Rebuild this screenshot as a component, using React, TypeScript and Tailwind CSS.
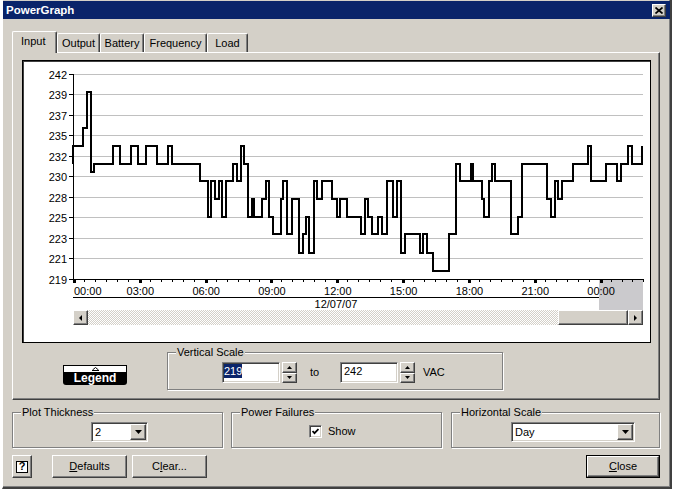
import React from "react";

const raised =
  "border border-t-white border-l-white border-r-[#404040] border-b-[#404040] bg-[#d4d0c8] shadow-[inset_-1px_-1px_0_#808080]";
const sunken =
  "border border-t-[#808080] border-l-[#808080] border-r-white border-b-white bg-white shadow-[inset_1px_1px_0_#404040,inset_-1px_-1px_0_#d4d0c8]";
const etched = "border border-[#808080] shadow-[1px_1px_0_#ffffff,inset_1px_1px_0_#ffffff]";

const yLabels = ["242", "239", "237", "235", "232", "230", "228", "225", "223", "221", "219"];
const gridY = (i: number) => Math.floor(74 + i * 20.55) + 0.5;
const hourX = (h: number) => 73 + (h * 526.6) / 24;
const timeLabels = ["00:00", "03:00", "06:00", "09:00", "12:00", "15:00", "18:00", "21:00", "00:00"];

// input voltage trace, page pixel coordinates
const trace =
  "M73,164 V146 H83 V128 H87 V92 H91 V172 H94 V164 H113 V146 H120 V164 H131 V146 H138 V164 H146 V146 H157 V164 H168 V146 H172 V164 H200 V181 H208 V217 H211 V181 H215 V199 H219 V181 H222 V217 H226 V181 H233 V164 H237 V181 H241 V146 H244 V164 H248 V217 H252 V199 H254 V217 H262 V199 H266 V181 H269 V217 H273 V234 H281 V199 H283 V181 H287 V234 H292 V199 H299 V253 H303 V234 H306 V217 H309 V253 H314 V181 H317 V199 H322 V181 H332 V199 H337 V217 H340 V199 H347 V217 H361 V234 H365 V199 H368 V217 H372 V234 H378 V217 H382 V234 H387 V181 H393 V217 H397 V181 H401 V253 H405 V234 H420 V253 H423 V234 H427 V253 H433 V271 H449 V234 H456 V164 H460 V181 H471 V164 H473 V181 H482 V199 H484 V217 H489 V181 H492 V164 H495 V181 H511 V234 H518 V217 H522 V164 H547 V199 H551 V217 H555 V181 H558 V199 H562 V181 H573 V164 H588 V146 H591 V181 H606 V164 H617 V181 H621 V164 H628 V146 H632 V164 H642 V146";

function DownArrow() {
  return (
    <svg width="7" height="4" viewBox="0 0 7 4">
      <polygon points="0,0 7,0 3.5,4" fill="#000" />
    </svg>
  );
}

function SpinArrow({ up }: { up?: boolean }) {
  return (
    <svg width="5" height="3" viewBox="0 0 5 3">
      <polygon points={up ? "0,3 5,3 2.5,0" : "0,0 5,0 2.5,3"} fill="#000" />
    </svg>
  );
}

function Chart() {
  const ticks: number[] = [];
  for (let k = 0; k <= 52; k++) {
    const x = Math.round(73 + k * 10.97);
    if (x <= 643) ticks.push(k);
  }
  return (
    <svg
      width="626"
      height="249"
      viewBox="23 61 626 249"
      className="block"
      fontFamily="'Liberation Sans', Arial, sans-serif"
      fontSize="11"
    >
      {yLabels.slice(0, 10).map((_, i) => (
        <line key={i} x1="73" x2="643" y1={gridY(i)} y2={gridY(i)} stroke="#c0c0c0" />
      ))}
      <rect x="599" y="280" width="44" height="30" fill="#cbcacd" />
      <line x1="73.5" x2="73.5" y1="74" y2="281" stroke="#000" />
      <line x1="73" x2="643" y1="279.5" y2="279.5" stroke="#000" />
      {yLabels.map((l, i) => (
        <g key={l}>
          <line x1="69" x2="73" y1={gridY(i)} y2={gridY(i)} stroke="#000" />
          <text x="67" y={gridY(i) + 4} textAnchor="end" fill="#000">
            {l}
          </text>
        </g>
      ))}
      {ticks.map((k) => {
        const x = Math.round(73 + k * 10.97);
        return k % 6 === 0 ? (
          <rect key={k} x={x} y="279" width="3" height="4" fill="#000" />
        ) : (
          <rect key={k} x={x} y="279" width="1" height="3" fill="#000" />
        );
      })}
      {timeLabels.map((t, i) => {
        const x = hourX(i * 3);
        return (
          <text key={i} x={i === 0 ? 74 : x + 1.5} y="295" textAnchor={i === 0 ? "start" : "middle"} fill="#000">
            {t}
          </text>
        );
      })}
      <line x1="73" x2="599" y1="297.5" y2="297.5" stroke="#000" />
      <text x="336" y="307.5" textAnchor="middle" fill="#000">
        12/07/07
      </text>
      <path d={trace} fill="none" stroke="#000" strokeWidth="2" strokeLinejoin="miter" />
    </svg>
  );
}

function ScrollBar() {
  return (
    <div className="ml-[50px] flex h-[15px] w-[570px]">
      <div className={`${raised} flex h-[15px] w-[15px] items-center justify-center`}>
        <svg width="3" height="6" viewBox="0 0 3 6">
          <polygon points="3,0 3,6 0,3" fill="#000" />
        </svg>
      </div>
      <div className="h-[15px] flex-1 bg-[repeating-conic-gradient(#d4d0c8_0%_25%,#ffffff_0%_50%)] bg-[length:2px_2px]" />
      <div className={`${raised} h-[15px] w-[70px]`} />
      <div className={`${raised} flex h-[15px] w-[15px] items-center justify-center`}>
        <svg width="3" height="6" viewBox="0 0 3 6">
          <polygon points="0,0 0,6 3,3" fill="#000" />
        </svg>
      </div>
    </div>
  );
}

function GroupBox({ label, className, children }: { label: string; className: string; children?: React.ReactNode }) {
  return (
    <div className={`relative ${etched} ${className}`}>
      <span className="absolute left-[8px] top-[-7px] bg-[#d4d0c8] px-[1px] leading-[13px]">{label}</span>
      {children}
    </div>
  );
}

function Spinner() {
  return (
    <div className="ml-[2px] flex h-[21px] w-[15px] flex-col">
      <div className={`${raised} flex flex-1 items-center justify-center`}>
        <SpinArrow up />
      </div>
      <div className={`${raised} flex flex-1 items-center justify-center`}>
        <SpinArrow />
      </div>
    </div>
  );
}

function Combo({ value, width }: { value: string; width: string }) {
  return (
    <div className={`${sunken} flex h-[20px] items-center ${width}`}>
      <span className="flex-1 pl-[3px]">{value}</span>
      <div className={`${raised} mr-[1px] flex h-[16px] w-[16px] items-center justify-center`}>
        <DownArrow />
      </div>
    </div>
  );
}

export default function App() {
  return (
    <div className="flex h-[489px] w-[673px] overflow-hidden bg-white font-['Liberation_Sans',Arial,sans-serif] text-[11px] leading-[13px] text-black">
      <div className="w-[2px] shrink-0 bg-white" />
      <div className="flex w-[670px] shrink-0 flex-col border-b-2 border-l border-r-2 border-b-[#404040] border-l-white border-r-[#404040] bg-[#d4d0c8] pt-[1px] shadow-[inset_-1px_-1px_0_#808080]">
        {/* title bar */}
        <div className="flex h-[18px] items-center bg-[#0a246a] pl-[3px] pr-[4px]">
          <span className="text-[11.5px] font-bold text-white">PowerGraph</span>
          <div className={`${raised} ml-auto flex h-[13px] w-[14px] items-center justify-center`}>
            <svg width="8" height="7" viewBox="0 0 8 7">
              <path d="M0.5,0.5 L7.5,6.5 M7.5,0.5 L0.5,6.5" stroke="#000" strokeWidth="1.7" />
            </svg>
          </div>
        </div>

        <div className="flex flex-1 flex-col pl-[9px] pt-[12px]">
          {/* tabs */}
          <div className="flex h-[21px] items-end">
            <div className="relative z-10 mb-[-1px] flex h-[22px] w-[45px] items-start rounded-t-[2px] border-l border-r border-t border-l-white border-r-[#404040] border-t-white bg-[#d4d0c8] pl-[8px] pt-[3px] shadow-[inset_-1px_0_0_#808080]">
              Input
            </div>
            {[
              ["Output", "w-[43px]"],
              ["Battery", "w-[44px]"],
              ["Frequency", "w-[63px]"],
              ["Load", "w-[41px]"],
            ].map(([t, w]) => (
              <div
                key={t}
                className={`flex h-[19px] ${w} justify-center rounded-t-[2px] border-l border-r border-t border-l-white border-r-[#404040] border-t-white pt-[3px] shadow-[inset_-1px_0_0_#808080]`}
              >
                {t}
              </div>
            ))}
          </div>

          {/* tab panel */}
          <div className="h-[348px] w-[648px] border border-b-[#404040] border-l-white border-r-[#404040] border-t-white pl-[9px] pt-[7px] shadow-[inset_-1px_-1px_0_#808080]">
            <div className="flex h-[283px] w-[629px] flex-col border border-black bg-white shadow-[inset_1px_1px_0_#404040]">
              <Chart />
              <ScrollBar />
            </div>

            <div className="mt-[9px] flex items-start">
              {/* legend */}
              <div className="ml-[41px] mt-[13px] flex w-[64px] flex-col">
                <div className="flex h-[7px] items-start justify-center border-l border-r border-t border-black bg-white pt-[1px]">
                  <svg width="7" height="4" viewBox="0 0 7 4">
                    <polyline points="0.5,3 3.5,0.5 6.5,3" fill="none" stroke="#000" />
                    <line x1="0" x2="7" y1="3.5" y2="3.5" stroke="#000" />
                  </svg>
                </div>
                <div className="flex h-[13px] items-end justify-center overflow-hidden rounded-b-[3px] bg-black pb-[1px] text-[12px] font-bold leading-[11px] text-white">
                  Legend
                </div>
              </div>

              <GroupBox label="Vertical Scale" className="ml-[40px] h-[38px] w-[336px]">
                <div className="mt-[9px] flex h-[21px] items-center pl-[54px]">
                  <div className={`${sunken} flex h-[21px] w-[58px] items-start pl-[1px] pt-[1px]`}>
                    <span className="bg-[#0a246a] leading-[14px] text-white">219</span>
                  </div>
                  <Spinner />
                  <span className="ml-[13px] w-[30px]">to</span>
                  <div className={`${sunken} flex h-[21px] w-[58px] items-start pl-[3px] pt-[1px]`}>
                    <span className="leading-[14px]">242</span>
                  </div>
                  <Spinner />
                  <span className="ml-[8px]">VAC</span>
                </div>
              </GroupBox>
            </div>
          </div>

          {/* option groups */}
          <div className="mt-[12px] flex h-[36px]">
            <GroupBox label="Plot Thickness" className="h-[36px] w-[211px]">
              <div className="ml-[78px] mt-[9px]">
                <Combo value="2" width="w-[57px]" />
              </div>
            </GroupBox>
            <GroupBox label="Power Failures" className="ml-[8px] h-[36px] w-[211px]">
              <div className="ml-[77px] mt-[12px] flex h-[13px] items-center">
                <div className={`${sunken} flex h-[13px] w-[13px] items-center justify-center`}>
                  <svg width="7" height="7" viewBox="0 0 7 7">
                    <polyline points="0.5,3 2.5,5.2 6.5,1" fill="none" stroke="#000" strokeWidth="1.8" />
                  </svg>
                </div>
                <span className="ml-[6px]">Show</span>
              </div>
            </GroupBox>
            <GroupBox label="Horizontal Scale" className="ml-[9px] h-[36px] w-[209px]">
              <div className="ml-[59px] mt-[9px]">
                <Combo value="Day" width="w-[124px]" />
              </div>
            </GroupBox>
          </div>

          {/* buttons */}
          <div className="mt-[7px] flex h-[23px]">
            <div className={`${raised} flex h-[23px] w-[20px] items-center justify-center`}>
              <span className="flex h-[12px] w-[12px] items-center justify-center border border-black bg-white text-[11px] font-bold leading-none">
                ?
              </span>
            </div>
            <div className={`${raised} ml-[20px] flex h-[23px] w-[75px] items-center justify-center`}>
              <span>
                <span className="underline">D</span>efaults
              </span>
            </div>
            <div className={`${raised} ml-[5px] flex h-[23px] w-[75px] items-center justify-center`}>
              <span>
                C<span className="underline">l</span>ear...
              </span>
            </div>
            <div className="ml-[379px] h-[23px] w-[74px] border border-black">
              <div className={`${raised} flex h-full w-full items-center justify-center`}>
                <span>
                  <span className="underline">C</span>lose
                </span>
              </div>
            </div>
          </div>
        </div>
      </div>
      <div className="w-[1px] shrink-0 bg-white" />
    </div>
  );
}
